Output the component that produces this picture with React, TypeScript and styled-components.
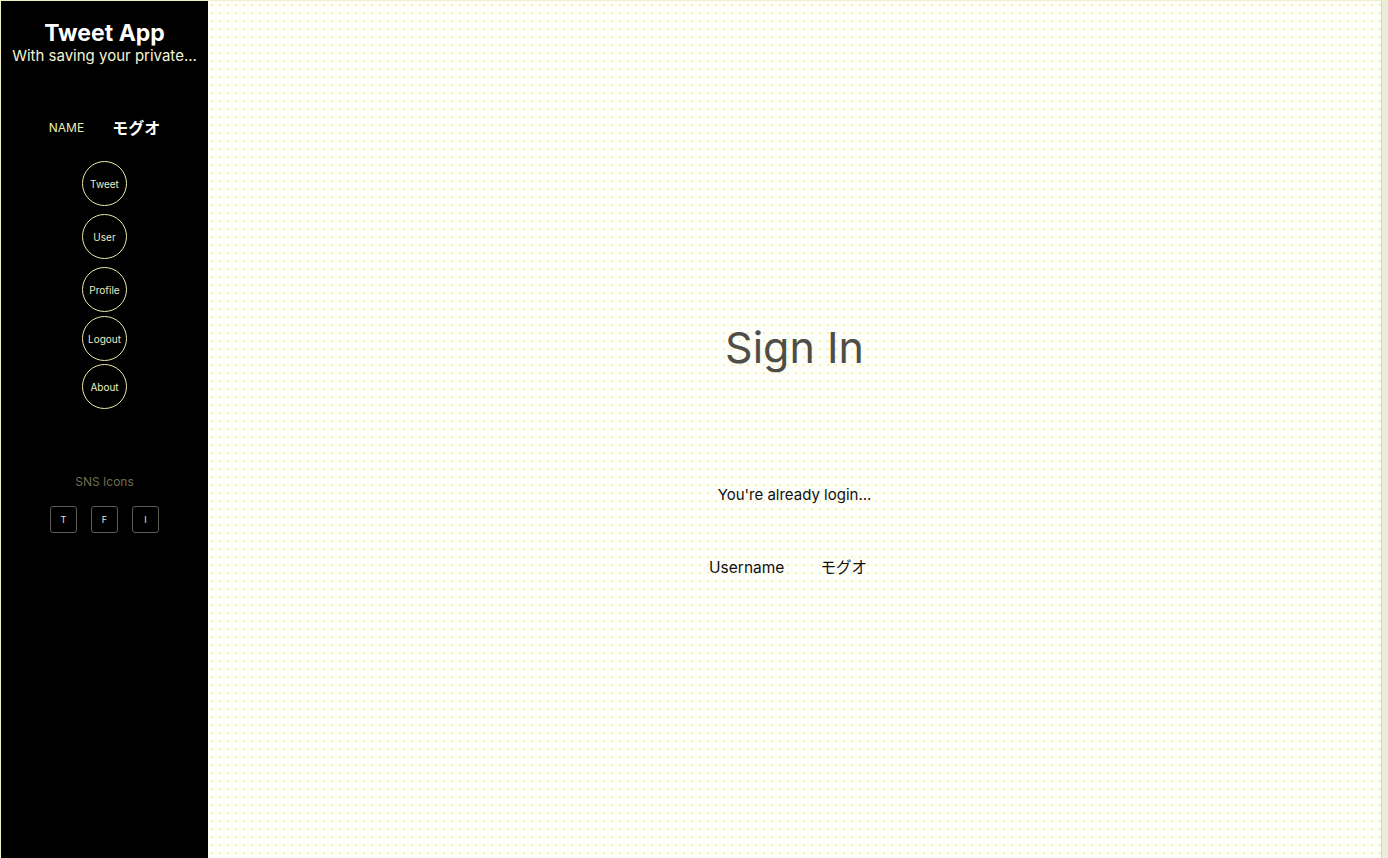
import React from "react";
import styled, { createGlobalStyle } from "styled-components";

const GlobalStyle = createGlobalStyle`
  html, body {
    margin: 0;
    padding: 0;
    height: 100%;
  }
  body {
    background: #ecece0;
    font-family: Inter, "Noto Sans", "Noto Sans CJK JP", sans-serif;
  }
  #root {
    height: 100%;
  }
`;

const navItems = [
  { label: "Tweet", gap: 0 },
  { label: "User", gap: 8 },
  { label: "Profile", gap: 8 },
  { label: "Logout", gap: 4 },
  { label: "About", gap: 3 },
];

const snsItems = ["T", "F", "I"];

export default function App() {
  return (
    <>
      <GlobalStyle />
      <Frame>
        <Sidebar>
          <Brand>
            <h1>Tweet App</h1>
            <p>With saving your private...</p>
          </Brand>
          <NameRow>
            <span className="label">NAME</span>
            <span className="value">モグオ</span>
          </NameRow>
          <Nav>
            {navItems.map((item) => (
              <NavCircle key={item.label} $gap={item.gap}>
                {item.label}
              </NavCircle>
            ))}
          </Nav>
          <Sns>
            <span className="title">SNS Icons</span>
            <div className="icons">
              {snsItems.map((s) => (
                <SnsBox key={s}>{s}</SnsBox>
              ))}
            </div>
          </Sns>
        </Sidebar>
        <Main>
          <Title>Sign In</Title>
          <Message>You're already login...</Message>
          <InfoRow>
            <span>Username</span>
            <span>モグオ</span>
          </InfoRow>
        </Main>
        <Edge />
      </Frame>
    </>
  );
}

const Frame = styled.div`
  height: 100vh;
  box-sizing: border-box;
  display: flex;
  border-top: 1px solid #f0f0c8;
  border-left: 1px solid #f0f0c8;
`;

const Sidebar = styled.aside`
  width: 207px;
  flex-shrink: 0;
  background-color: #000;
  display: flex;
  flex-direction: column;
  align-items: center;
`;

const Brand = styled.div`
  text-align: center;
  padding-top: 19px;
  h1 {
    margin: 0;
    color: #ffffff;
    font-size: 23px;
    font-weight: 700;
    line-height: 26px;
  }
  p {
    margin: 0;
    color: #f4f4d4;
    font-size: 15px;
    line-height: 19px;
  }
`;

const NameRow = styled.div`
  display: flex;
  align-items: center;
  gap: 28px;
  margin-top: 50px;
  .label {
    color: #ececb0;
    font-size: 12px;
  }
  .value {
    color: #ffffff;
    font-size: 16px;
    font-weight: 700;
  }
`;

const Nav = styled.nav`
  display: flex;
  flex-direction: column;
  align-items: center;
  margin-top: 22px;
`;

const NavCircle = styled.div<{ $gap: number }>`
  width: 43px;
  height: 43px;
  margin-top: ${(p) => p.$gap}px;
  border: 1px solid #e8e8a8;
  border-radius: 50%;
  display: flex;
  align-items: center;
  justify-content: center;
  color: #ececc4;
  font-size: 10px;
`;

const Sns = styled.div`
  display: flex;
  flex-direction: column;
  align-items: center;
  margin-top: 65px;
  .title {
    color: #6e6e50;
    font-size: 12px;
    line-height: 16px;
  }
  .icons {
    display: flex;
    gap: 14px;
    margin-top: 16px;
  }
`;

const SnsBox = styled.div`
  width: 25px;
  height: 25px;
  border: 1px solid #5c5c54;
  border-radius: 3px;
  display: flex;
  align-items: center;
  justify-content: center;
  color: #e8e8d0;
  font-size: 9px;
`;

const Main = styled.main`
  flex: 1;
  background-color: #fdfdf9;
  background-image: radial-gradient(#f6f2a8 0.8px, transparent 1px);
  background-size: 8px 8px;
  border-right: 1px solid #d8d8cc;
  display: flex;
  flex-direction: column;
  align-items: center;
  padding-top: 318px;
`;

const Title = styled.h2`
  margin: 0;
  color: #4e4e46;
  font-size: 43px;
  font-weight: 400;
  line-height: 56px;
`;

const Message = styled.p`
  margin: 110px 0 0;
  color: #111;
  font-size: 15px;
  line-height: 20px;
`;

const InfoRow = styled.div`
  display: flex;
  gap: 36px;
  margin: 53px 13px 0 0;
  color: #111;
  font-size: 15.5px;
  line-height: 20px;
`;

const Edge = styled.div`
  width: 6px;
  flex-shrink: 0;
  background: #ececdc;
`;
